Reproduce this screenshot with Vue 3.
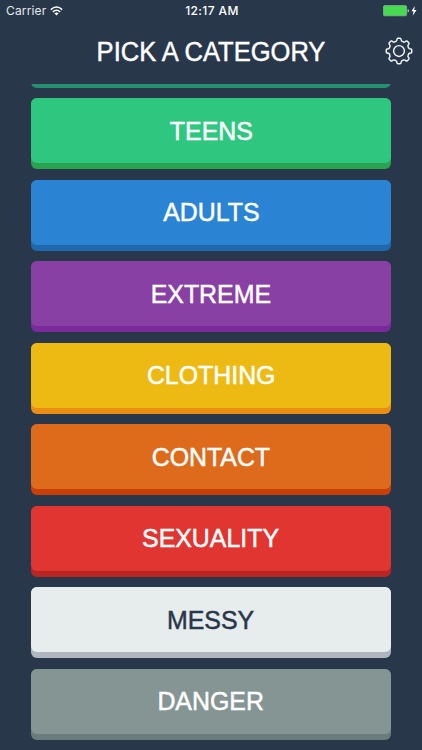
<script setup>
const categories = [
  { name: 'TEENS', tone: 'green' },
  { name: 'ADULTS', tone: 'blue' },
  { name: 'EXTREME', tone: 'purple' },
  { name: 'CLOTHING', tone: 'yellow' },
  { name: 'CONTACT', tone: 'orange' },
  { name: 'SEXUALITY', tone: 'red' },
  { name: 'MESSY', tone: 'light' },
  { name: 'DANGER', tone: 'gray' },
]

// Outline of an eight-toothed gear centred on 14,14
const point = (r, deg) => {
  const a = (deg * Math.PI) / 180
  return `${(14 + r * Math.sin(a)).toFixed(2)} ${(14 - r * Math.cos(a)).toFixed(2)}`
}
let gear = ''
for (let i = 0; i < 8; i++) {
  const c = i * 45
  gear += `${i ? 'L' : 'M'}${point(10.9, c - 12)} L${point(12, c - 9.5)} Q${point(12.8, c - 8)} ${point(12.8, c - 5)} L${point(12.8, c + 5)} Q${point(12.8, c + 8)} ${point(12, c + 9.5)} L${point(10.9, c + 12)} Q${point(10.1, c + 15)} ${point(10.1, c + 18)} L${point(10.1, c + 27)} Q${point(10.1, c + 30)} ${point(10.9, c + 33)} `
}
gear += 'Z'
</script>

<template>
  <main class="screen">
    <div class="status">
      <div class="carrier">
        <span>Carrier</span>
        <svg class="wifi" viewBox="0 0 13 10" width="13" height="10">
          <g fill="none" stroke="#fff" stroke-width="1.5">
            <path d="M.8 3.6Q6.5-1.5 12.2 3.6" />
            <path d="M2.8 5.9Q6.5 2.7 10.2 5.9" />
          </g>
          <path d="M4.4 7.2Q6.5 5.6 8.6 7.2L6.5 9.4Z" fill="#fff" />
        </svg>
      </div>
      <span class="clock">12:17 AM</span>
      <svg class="battery" viewBox="0 0 35 12" width="35" height="12">
        <rect x=".4" y=".6" width="23.2" height="10.2" rx="1.4" fill="#47d851" stroke="#8bb795" stroke-width=".7" />
        <path d="M24.6 4q1.5 0 1.5 1.7t-1.5 1.7z" fill="#aeb9c1" />
        <path d="M31.8 1.1 28.4 6.3h2.1l-.8 4.4 3.8-5.6h-2.3z" fill="#fff" />
      </svg>
    </div>
    <header class="header">
      <h1>PICK A CATEGORY</h1>
      <svg class="gear" viewBox="0 0 28 28" width="28" height="28">
        <g fill="none" stroke="#f4f7f9" stroke-width="1.45" stroke-linejoin="round">
          <path :d="gear" />
          <circle cx="14" cy="14" r="5.4" />
        </g>
      </svg>
    </header>
    <div class="list">
      <div class="category teal"><span class="face"></span></div>
      <button v-for="c in categories" :key="c.name" :class="['category', c.tone]">
        <span class="face"><span class="label">{{ c.name }}</span></span>
      </button>
    </div>
  </main>
</template>

<style>
body { margin: 0; background: #28374a; }
</style>

<style scoped>
.screen {
  width: 422px;
  height: 750px;
  overflow: hidden;
  display: flex;
  flex-direction: column;
  background: #28374a;
  color: #fff;
  font-family: "Liberation Sans", Arial, sans-serif;
}
.status {
  height: 22px;
  flex: none;
  display: grid;
  grid-template-columns: 1fr auto 1fr;
  align-items: center;
  padding: 0 4px 0 6px;
  box-sizing: border-box;
  font: 12px/22px Inter, sans-serif;
}
.carrier { display: flex; align-items: center; gap: 4px; color: #e6eaee; letter-spacing: .15px; }
.clock { font-weight: 500; letter-spacing: .4px; }
.battery { justify-self: end; }
.header {
  height: 62px;
  flex: none;
  display: grid;
  grid-template-columns: 42px 1fr 42px;
  align-items: start;
}
h1 {
  grid-column: 2;
  margin: 0;
  padding-top: 15px;
  text-align: center;
  font-size: 27px;
  line-height: 31px;
  font-weight: 400;
  white-space: nowrap;
  transform: scaleX(.945);
  -webkit-text-stroke: .45px currentColor;
}
.gear { margin: 15px 0 0 5px; }
.list {
  flex: 1;
  min-height: 0;
  overflow: hidden;
  display: flex;
  flex-direction: column;
  justify-content: flex-end;
  gap: 10.5px;
  padding: 0 31px 10.5px;
}
.category {
  flex: none;
  box-sizing: border-box;
  height: 71px;
  padding: 0 0 6px;
  border: 0;
  border-radius: 6px;
  color: #fff;
  background: var(--edge);
  font: 26px/30px "Liberation Sans", Arial, sans-serif;
  -webkit-text-stroke: .5px currentColor;
}
.face {
  height: 65px;
  display: flex;
  align-items: center;
  justify-content: center;
  border-radius: 6px;
  background: var(--face);
}
.label { transform: scaleX(.957); }
.teal { --face: #22b58c; --edge: #23906f; }
.green { --face: #2fc780; --edge: #2aa34f; }
.blue { --face: #2b84d3; --edge: #2068ae; }
.purple { --face: #8940a5; --edge: #7b2a9c; }
.yellow { --face: #ecba12; --edge: #ec8d13; }
.orange { --face: #de6b1c; --edge: #c84008; }
.red { --face: #e03531; --edge: #b82522; }
.light { --face: #e7eced; --edge: #afb6bd; color: #28374a; }
.gray { --face: #849594; --edge: #6c7b7b; }
</style>
